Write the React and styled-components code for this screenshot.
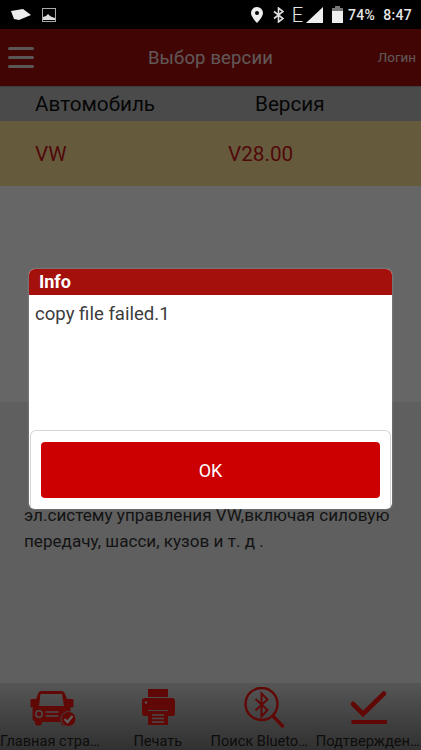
import React from "react";
import styled, { createGlobalStyle } from "styled-components";

const Global = createGlobalStyle`
  html, body { margin: 0; padding: 0; background: #000; }
  * { box-sizing: border-box; }
  body { font-family: Roboto, "Noto Sans", sans-serif; }
`;

const Page = styled.div`
  position: relative;
  width: 421px;
  height: 750px;
  overflow: hidden;
  display: flex;
  flex-direction: column;
  background: #fff;
`;

const StatusBar = styled.div`
  position: relative;
  z-index: 3;
  flex: 0 0 29px;
  background: #000;
  display: flex;
  align-items: center;
  padding: 0 9px 0 11px;
  color: #e6e6e6;
  font-size: 14px;
  font-weight: 500;
`;
const StatusLeft = styled.div`
  display: flex;
  align-items: center;
  gap: 11px;
  flex: 1;
`;
const StatusRight = styled.div`
  display: flex;
  align-items: center;
`;
const StatusText = styled.span`
  margin-left: ${(props) => props.ml}px;
  letter-spacing: 0.3px;
`;
const NetworkType = styled.span`
  margin-left: ${(props) => props.ml}px;
  font-size: 20px;
  font-weight: 300;
  line-height: 20px;
`;
const Glyph = styled.svg`
  display: block;
  margin-left: ${(props) => props.ml || 0}px;
`;

const Header = styled.header`
  flex: 0 0 57px;
  background: #a30f0c;
  display: grid;
  grid-template-columns: 1fr auto 1fr;
  align-items: center;
  padding: 0 5px;
  color: #fff;
`;
const Burger = styled.div`
  width: 26px;
  margin-left: 3px;
  display: flex;
  flex-direction: column;
  gap: 6px;
  span {
    display: block;
    height: 3px;
    border-radius: 2px;
    background: #e4d8d8;
  }
`;
const Title = styled.div`
  font-size: 18.4px;
  opacity: 0.85;
  letter-spacing: 0.2px;
`;
const Login = styled.div`
  font-size: 13.4px;
  text-align: right;
  opacity: 0.85;
`;

const Row = styled.div`
  flex: 0 0 ${(props) => props.h}px;
  display: grid;
  grid-template-columns: ${(props) => props.col}px 1fr;
  align-items: center;
  padding-left: 35px;
  background: ${(props) => props.bg};
  color: ${(props) => props.fg};
  font-size: 20.7px;
  border-top: 1px solid ${(props) => props.line || "transparent"};
`;

const Spacer = styled.div`
  flex: 0 0 216px;
  background: #fff;
`;

const Desc = styled.div`
  flex: 1;
  background: #ededed;
  padding: 100px 10px 0 24px;
  color: #333;
  font-size: 17.1px;
  line-height: 26px;
`;

const TabBar = styled.nav`
  flex: 0 0 67px;
  display: grid;
  grid-template-columns: repeat(4, 1fr);
  background: linear-gradient(#d6d6d6, #7a7a7a);
`;
const Tab = styled.div`
  display: flex;
  flex-direction: column;
  align-items: center;
  min-width: 0;
  padding-top: 4px;
`;
const TabIcon = styled.svg`
  display: block;
  width: 48px;
  height: 44px;
  color: #f01410;
`;
const TabLabel = styled.div`
  width: 100%;
  padding-top: 2px;
  text-align: center;
  font-size: 14.6px;
  line-height: 17px;
  color: #222;
  white-space: nowrap;
  overflow: hidden;
  text-overflow: ellipsis;
`;

const Overlay = styled.div`
  position: absolute;
  inset: 0;
  z-index: 2;
  background: rgba(0, 0, 0, 0.6);
  padding: 269px 29px 0 29px;
`;
const Dialog = styled.div`
  height: 240px;
  background: #fff;
  border-radius: 6px;
  overflow: hidden;
  display: flex;
  flex-direction: column;
  box-shadow: 0 0 2px rgba(255, 255, 255, 0.4);
`;
const DialogTitle = styled.div`
  flex: 0 0 25px;
  background: #a4100c;
  color: #fff;
  font-size: 18px;
  font-weight: 700;
  line-height: 26px;
  padding-left: 10px;
`;
const DialogBody = styled.div`
  flex: 1;
  padding: 8px 6px;
  color: #3c3c3c;
  font-size: 18.6px;
  line-height: 22px;
`;
const DialogFooter = styled.div`
  flex: 0 0 79px;
  margin: 0 1px;
  padding: 11px 10px;
  border: 1px solid #d5d5d5;
  border-bottom: none;
  border-radius: 6px 6px 0 0;
`;
const OkButton = styled.button`
  display: block;
  width: 100%;
  height: 56px;
  border: none;
  border-radius: 4px;
  background: #cc0000;
  color: #fff;
  font: 400 18px Roboto, sans-serif;
`;

const tabs = [
  {
    label: "Главная страница",
    icon: (
      <>
        <path
          fillRule="evenodd"
          d="M12 4h20c2 0 3.500 1 4 3l2 5h5c1 0 1.500 .5 1.500 1.500V19c0 1-.5 1.500-1.500 1.500h-2c.5 1 .5 2 .5 3V33c0 1-1 2-2 2h-1v1c0 1.500-1 2.500-2.500 2.500h-2C33 38.500 32 37.500 32 36v-1H13v1c0 1.500-1 2.500-2.500 2.500h-2C7 38.500 6 37.500 6 36v-1.500C4.500 34 3.500 33 3.500 31.500v-8c0-1 .1-2 .5-3H3c-1 0-1.500-.5-1.500-1.500v-5.500C1.500 12.500 2 12 3 12h4l2-5c.5-2 1.500-3 3-3zm-.5 3L10 19h25L33 7z"
          fill="currentColor"
        />
        <circle cx="10" cy="27" r="3.200" fill="none" stroke="#bdbdbd" strokeWidth="1.500" />
        <path d="M16.500 25h13M16.500 29h13" stroke="#bdbdbd" strokeWidth="1.300" />
        <circle cx="39.500" cy="32" r="7.500" fill="currentColor" stroke="#a8a8a8" strokeWidth="1" />
        <path d="M35.500 32l3 3 5-6" stroke="#ececec" strokeWidth="2.200" fill="none" />
      </>
    ),
  },
  {
    label: "Печать",
    icon: (
      <>
        <path d="M14 2h20v8H14z" fill="currentColor" />
        <path d="M11 11h27c2 0 3 1 3 3v13c0 1-1 2-2 2h-5v-6H14v6H10c-1 0-2-1-2-2V14c0-2 1-3 3-3z" fill="currentColor" />
        <path d="M14 24h20v14H14z" fill="currentColor" />
        <path d="M18 28h12M18 31.500h12M18 35h12" stroke="#bbb" strokeWidth="1.400" />
        <circle cx="12" cy="15.500" r="1.300" fill="#ccc" />
      </>
    ),
  },
  {
    label: "Поиск Bluetooth",
    icon: (
      <g fill="none" stroke="currentColor">
        <circle cx="22.500" cy="17" r="16" strokeWidth="2.400" />
        <path d="M34 29l9.500 10" strokeWidth="3.400" strokeLinecap="round" />
        <path d="M16.500 12l12 11-6 6.500V6.500l6 6-12 11" strokeWidth="2" />
      </g>
    ),
  },
  {
    label: "Подтверждение",
    icon: (
      <g fill="none" stroke="currentColor" strokeWidth="4.600">
        <path d="M9 17l10 10L40 6.500" strokeLinecap="round" />
        <path d="M7.500 35h35.500" strokeWidth="4" />
      </g>
    ),
  },
];

export default function App() {
  return (
    <Page>
      <Global />
      <StatusBar>
        <StatusLeft>
          <Glyph width="20" height="12" viewBox="0 0 20 12">
            <path d="M0 2L12 0l8 6-12 5-5-1z" fill="#eee" />
          </Glyph>
          <Glyph width="14" height="14" viewBox="0 0 14 14">
            <rect x="0.500" y="0.500" width="13" height="13" fill="none" stroke="#aaa" />
            <path d="M1 12V9l3-1 2-2 2 2 2 1 3 1v2z" fill="#ddd" />
          </Glyph>
        </StatusLeft>
        <StatusRight>
          <Glyph width="12" height="16" viewBox="0 0 12 16">
            <path fillRule="evenodd" d="M6 0a6 6 0 0 1 6 6c0 4-6 10-6 10S0 10 0 6a6 6 0 0 1 6-6zm0 4a2 2 0 1 0 0 4 2 2 0 0 0 0-4z" fill="#eee" />
          </Glyph>
          <Glyph ml={10} width="11" height="16" viewBox="0 0 11 16">
            <path d="M1 4.500l9 7-4.500 3.500V1L10 4.500l-9 7" fill="none" stroke="#ddd" strokeWidth="1.600" />
          </Glyph>
          <NetworkType ml={8}>E</NetworkType>
          <Glyph ml={3} width="17" height="16" viewBox="0 0 17 16">
            <path d="M0 16L17 0v16z" fill="#eee" />
          </Glyph>
          <Glyph ml={9} width="11" height="17" viewBox="0 0 11 17">
            <path d="M3 0h5v2h3v15H0V2h3z" fill="#777" />
            <path d="M0 5h11v12H0z" fill="#eee" />
          </Glyph>
          <StatusText ml={5}>74%</StatusText>
          <StatusText ml={8}>8:47</StatusText>
        </StatusRight>
      </StatusBar>

      <Header>
        <Burger>
          <span />
          <span />
          <span />
        </Burger>
        <Title>Выбор версии</Title>
        <Login>Логин</Login>
      </Header>

      <Row h={35} col={220} bg="#b9b9b9" fg="#111" line="#999">
        <span>Автомобиль</span>
        <span>Версия</span>
      </Row>
      <Row h={65} col={193} bg="#ffe19a" fg="#c81818">
        <span>VW</span>
        <span>V28.00</span>
      </Row>
      <Spacer />

      <Desc>
        эл.систему управления VW,включая силовую
        <br />
        передачу, шасси, кузов и т. д .
      </Desc>

      <TabBar>
        {tabs.map((t) => (
          <Tab key={t.label}>
            <TabIcon viewBox="0 0 48 44">{t.icon}</TabIcon>
            <TabLabel>{t.label}</TabLabel>
          </Tab>
        ))}
      </TabBar>

      <Overlay>
        <Dialog>
          <DialogTitle>Info</DialogTitle>
          <DialogBody>copy file failed.1</DialogBody>
          <DialogFooter>
            <OkButton>OK</OkButton>
          </DialogFooter>
        </Dialog>
      </Overlay>
    </Page>
  );
}
